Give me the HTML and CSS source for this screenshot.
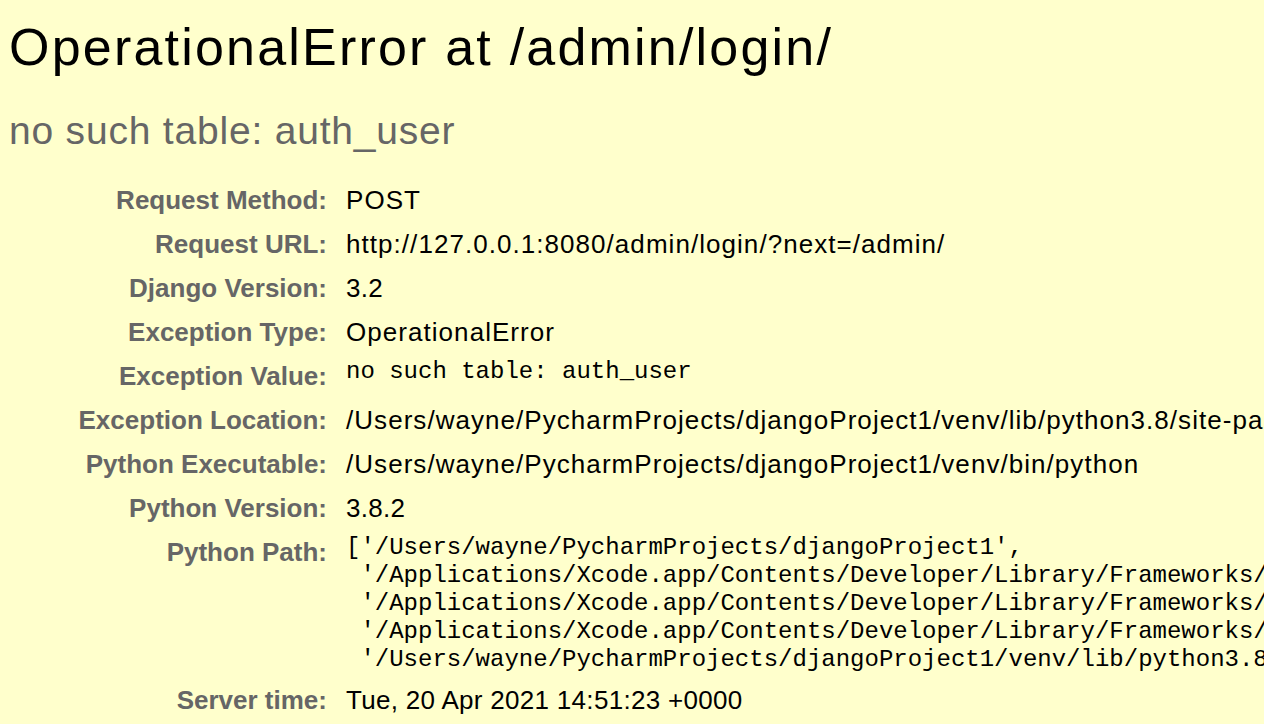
FILE: index.html
```html
<!DOCTYPE html>
<html lang="en">
<head>
<meta charset="utf-8">
<title>OperationalError at /admin/login/</title>
<link rel="stylesheet" href="styles.css">
</head>
<body>
<div class="summary">
  <h1 class="title">OperationalError at /admin/login/</h1>
  <h2 class="subtitle">no such table: auth_user</h2>
  <table class="meta">
    <tbody>
      <tr><th>Request Method:</th><td>POST</td></tr>
      <tr><th>Request URL:</th><td>http://127.0.0.1:8080/admin/login/?next=/admin/</td></tr>
      <tr><th>Django Version:</th><td class="num">3.2</td></tr>
      <tr><th>Exception Type:</th><td>OperationalError</td></tr>
      <tr><th>Exception Value:</th><td><pre class="mono">no such table: auth_user</pre></td></tr>
      <tr><th>Exception Location:</th><td>/Users/wayne/PycharmProjects/djangoProject1/venv/lib/python3.8/site-packages/django/db/backends/sqlite3/base.py, line 423, in execute</td></tr>
      <tr><th>Python Executable:</th><td>/Users/wayne/PycharmProjects/djangoProject1/venv/bin/python</td></tr>
      <tr><th>Python Version:</th><td class="num">3.8.2</td></tr>
      <tr><th>Python Path:</th><td><pre class="mono">['/Users/wayne/PycharmProjects/djangoProject1',
 '/Applications/Xcode.app/Contents/Developer/Library/Frameworks/Python3.framework/Versions/3.8/lib/python38.zip',
 '/Applications/Xcode.app/Contents/Developer/Library/Frameworks/Python3.framework/Versions/3.8/lib/python3.8',
 '/Applications/Xcode.app/Contents/Developer/Library/Frameworks/Python3.framework/Versions/3.8/lib/python3.8/lib-dynload',
 '/Users/wayne/PycharmProjects/djangoProject1/venv/lib/python3.8/site-packages']</pre></td></tr>
      <tr><th>Server time:</th><td class="num">Tue, 20 Apr 2021 14:51:23 +0000</td></tr>
    </tbody>
  </table>
</div>
</body>
</html>
```
FILE: styles.css
```css
html, body {
  margin: 0;
  padding: 0;
  background: #ffffcc;
  overflow: hidden;
}

body {
  font-family: "Liberation Sans", Arial, sans-serif;
  color: #000;
}

.summary {
  padding: 11px 0 0 9px;
}

.title {
  margin: 0;
  font-size: 52px;
  font-weight: normal;
  line-height: 72px;
  letter-spacing: 2.2px;
  white-space: nowrap;
}

.subtitle {
  margin: 21px 0 20px;
  font-size: 39px;
  font-weight: normal;
  color: #666;
  line-height: 54px;
  letter-spacing: 0.8px;
  white-space: nowrap;
}

.meta {
  border-collapse: collapse;
  width: max-content;
}

.meta th {
  width: 312px;
  min-width: 312px;
  padding: 4px 13px 4px 6px;
  text-align: right;
  vertical-align: top;
  color: #666;
  font-weight: bold;
  font-size: 26px;
  line-height: 36px;
  white-space: nowrap;
}

.meta td {
  padding: 4px 6px;
  vertical-align: top;
  font-size: 26px;
  line-height: 36px;
  letter-spacing: 1.05px;
  white-space: nowrap;
}

.meta td.num {
  letter-spacing: 0.3px;
}

.mono {
  margin: 0;
  font-family: "Liberation Mono", "Courier New", monospace;
  font-size: 24px;
  line-height: 28px;
  letter-spacing: 0;
  white-space: pre;
}
```
